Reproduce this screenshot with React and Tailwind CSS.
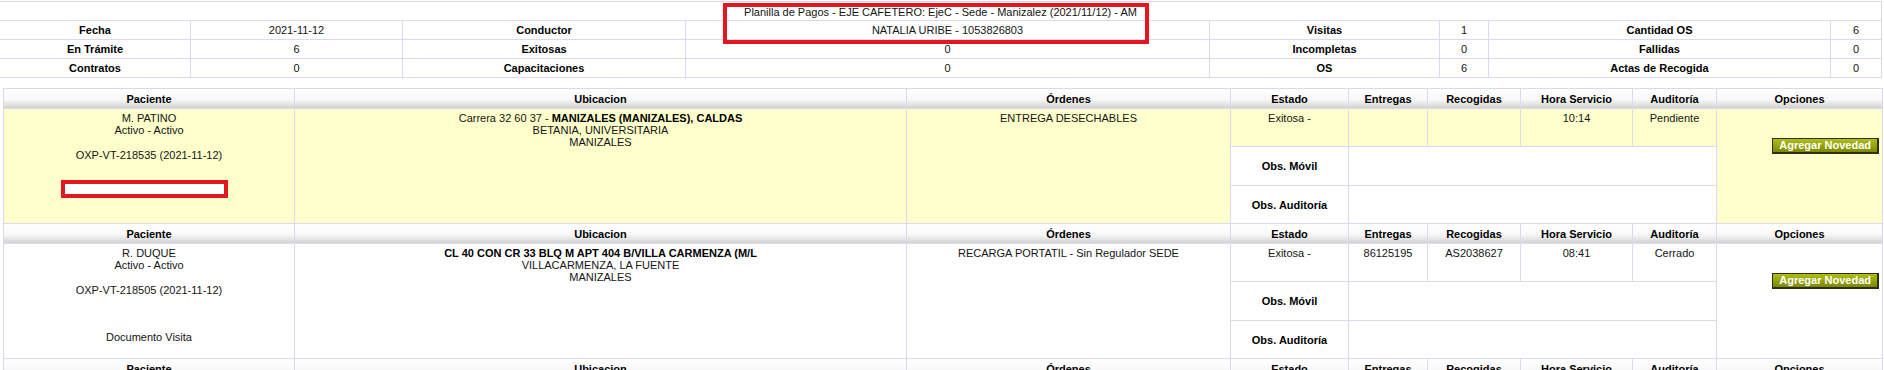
const line = "border-[#d9d9f5]";

const summary = [
  ["Fecha", "2021-11-12", "Conductor", "NATALIA URIBE - 1053826803", "Visitas", "1", "Cantidad OS", "6"],
  ["En Trámite", "6", "Exitosas", "0", "Incompletas", "0", "Fallidas", "0"],
  ["Contratos", "0", "Capacitaciones", "0", "OS", "6", "Actas de Recogida", "0"],
];

const heads = ["Paciente", "Ubicacion", "Órdenes", "Estado", "Entregas", "Recogidas", "Hora Servicio", "Auditoría", "Opciones"];

const visits = [
  {
    name: "M. PATINO",
    ot: "OXP-VT-218535 (2021-11-12)",
    street: "Carrera 32 60 37 - ",
    city: "MANIZALES (MANIZALES), CALDAS",
    barrio: "BETANIA, UNIVERSITARIA",
    muni: "MANIZALES",
    orden: "ENTREGA DESECHABLES",
    estado: "Exitosa -",
    entregas: "",
    recogidas: "",
    hora: "10:14",
    auditoria: "Pendiente",
    highlight: true,
    redacted: true,
  },
  {
    name: "R. DUQUE",
    ot: "OXP-VT-218505 (2021-11-12)",
    street: "",
    city: "CL 40 CON CR 33 BLQ M APT 404 B/VILLA CARMENZA (M/L",
    barrio: "VILLACARMENZA, LA FUENTE",
    muni: "MANIZALES",
    orden: "RECARGA PORTATIL - Sin Regulador SEDE",
    estado: "Exitosa -",
    entregas: "86125195",
    recogidas: "AS2038627",
    hora: "08:41",
    auditoria: "Cerrado",
  },
];

const cols = "grid grid-cols-[291px_612px_324px_118px_79px_93px_112px_84px_166px]";
const headBg = "bg-[linear-gradient(to_bottom,#ffffff_0%,#f8f8f8_55%,#d3d3d3_100%)]";

function HeaderRow() {
  return heads.map((h) => (
    <div key={h} className={`flex items-center justify-center border-b border-r ${line} ${headBg} font-bold text-black`}>
      {h}
    </div>
  ));
}

function Visit({ v }) {
  const bg = v.highlight ? "bg-[#ffffcc]" : "bg-white";
  const cell = `border-b border-r ${line}`;
  return (
    <div className={`${cols} grid-rows-[20px_38px_39px_38px]`}>
      <HeaderRow />
      <div className={`${cell} ${bg} row-span-3 pt-[3px] text-center`}>
        <div>{v.name}</div>
        <div>Activo - Activo</div>
        <div className="h-[13px]" />
        <div>{v.ot}</div>
        {v.redacted ? (
          <div className="ml-[57px] mt-[19px] h-[18px] w-[167px] border-4 border-[#e3171f] bg-white" />
        ) : (
          <div className="mt-[35px]">Documento Visita</div>
        )}
      </div>
      <div className={`${cell} ${bg} row-span-3 pt-[3px] text-center`}>
        <div>
          {v.street}
          <b className="text-black">{v.city}</b>
        </div>
        <div>{v.barrio}</div>
        <div>{v.muni}</div>
      </div>
      <div className={`${cell} ${bg} row-span-3 pt-[3px] text-center`}>{v.orden}</div>
      <div className={`${cell} ${bg} pt-[3px] text-center`}>{v.estado}</div>
      <div className={`${cell} ${bg} pt-[3px] text-center`}>{v.entregas}</div>
      <div className={`${cell} ${bg} pt-[3px] text-center`}>{v.recogidas}</div>
      <div className={`${cell} ${bg} pt-[3px] text-center`}>{v.hora}</div>
      <div className={`${cell} ${bg} pt-[3px] text-center`}>{v.auditoria}</div>
      <div className={`${cell} ${bg} row-span-3 flex items-start justify-end pr-[3px] pt-[29px]`}>
        <button className="h-[16px] border border-b-2 border-r-2 border-[#2e2e12] bg-[linear-gradient(to_bottom,#b0be12,#7c8900)] px-[6px] text-[11px] font-bold leading-none text-white">
          Agregar Novedad
        </button>
      </div>
      <div className={`${cell} flex items-center justify-center bg-white font-bold text-black`}>Obs. Móvil</div>
      <div className={`${cell} col-span-4 bg-white`} />
      <div className={`${cell} flex items-center justify-center bg-white font-bold text-black`}>Obs. Auditoría</div>
      <div className={`${cell} col-span-4 bg-white`} />
    </div>
  );
}

export default function App() {
  return (
    <div className="min-h-screen overflow-hidden bg-white font-['Liberation_Sans',Arial,sans-serif] text-[11px] leading-[normal] text-[#141414]">
      <div className={`relative mt-px w-[1882px] border-t ${line}`}>
        <div className={`flex h-[19px] items-center justify-center border-b border-r pt-[2px] ${line}`}>
          Planilla de Pagos - EJE CAFETERO: EjeC - Sede - Manizalez (2021/11/12) - AM
        </div>
        <div className="grid auto-rows-[19px] grid-cols-[191px_212px_283px_524px_230px_49px_342px_51px]">
          {summary.flat().map((t, i) => (
            <div
              key={i}
              className={`flex items-center justify-center border-b border-r ${line} ${i % 2 === 0 ? "font-bold text-black" : ""}`}
            >
              {t}
            </div>
          ))}
        </div>
        <div className="pointer-events-none absolute left-[723px] top-px h-[41px] w-[426px] border-4 border-[#e3171f]" />
      </div>

      <div className={`ml-[3px] mt-[10px] w-[1880px] border-l border-t ${line}`}>
        {visits.map((v) => (
          <Visit key={v.ot} v={v} />
        ))}
        <div className={`${cols} grid-rows-[20px]`}>
          <HeaderRow />
        </div>
      </div>
    </div>
  );
}
